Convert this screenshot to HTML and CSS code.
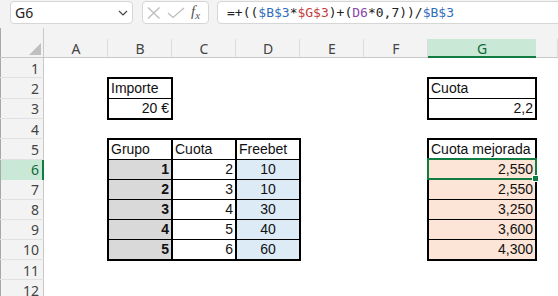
FILE: index.html
```html
<!DOCTYPE html>
<html lang="es">
<head>
  <meta charset="UTF-8">
  <title>Cuota mejorada</title>
  <link rel="stylesheet" href="styles.css">
</head>
<body>

  <div class="formula-bar">
    <div class="name-box">
      <span>G6</span>
      <svg width="10" height="6" viewBox="0 0 10 6"><polyline points="1,1 5,5 9,1" fill="none" stroke="#444" stroke-width="1.2"/></svg>
    </div>
    <div class="fx-box">
      <svg class="ico" width="14" height="12" viewBox="0 0 14 12"><path d="M1 0.5 L12.5 11.5 M12.5 0.5 L1 11.5" stroke="#bdbdbd" stroke-width="1.3" fill="none"/></svg>
      <svg class="ico" width="18" height="12" viewBox="0 0 18 12"><polyline points="1,6 6,10.5 17,1" fill="none" stroke="#bdbdbd" stroke-width="1.3"/></svg>
      <span class="fx"><i>f</i><sub>x</sub></span>
    </div>
    <div class="formula">=+((<span class="ref-b">$B$3</span>*<span class="ref-g">$G$3</span>)+(<span class="ref-d">D6</span>*0,7))/<span class="ref-b">$B$3</span></div>
  </div>

  <table class="sheet">
    <colgroup>
      <col class="c-head">
      <col class="c-std"><col class="c-std"><col class="c-std"><col class="c-std"><col class="c-std"><col class="c-std">
      <col class="c-wide">
      <col class="c-rest">
    </colgroup>
    <thead>
      <tr>
        <th class="corner"><span class="tri"></span></th>
        <th>A</th><th>B</th><th>C</th><th>D</th><th>E</th><th>F</th><th class="sel">G</th><th></th>
      </tr>
    </thead>
    <tbody>
      <tr><th>1</th><td></td><td></td><td></td><td></td><td></td><td></td><td></td><td></td></tr>
      <tr><th>2</th><td></td><td class="bt bl br tb">Importe</td><td></td><td></td><td></td><td></td><td class="bt bl br tb">Cuota</td><td></td></tr>
      <tr><th>3</th><td></td><td class="bl br bb num">20 €</td><td></td><td></td><td></td><td></td><td class="bl br bb num">2,2</td><td></td></tr>
      <tr><th>4</th><td></td><td></td><td></td><td></td><td></td><td></td><td></td><td></td></tr>
      <tr><th>5</th><td></td><td class="bt bl br tb">Grupo</td><td class="bt br tb">Cuota</td><td class="bt br tb">Freebet</td><td></td><td></td><td class="bt bl br tb">Cuota mejorada</td><td></td></tr>
      <tr><th class="sel">6</th><td></td><td class="bl br tb grp">1</td><td class="br tb num">2</td><td class="br tb fb">10</td><td></td><td></td><td class="bl br tb res active">2,550</td><td></td></tr>
      <tr><th>7</th><td></td><td class="bl br tb grp">2</td><td class="br tb num">3</td><td class="br tb fb">10</td><td></td><td></td><td class="bl br tb res">2,550</td><td></td></tr>
      <tr><th>8</th><td></td><td class="bl br tb grp">3</td><td class="br tb num">4</td><td class="br tb fb">30</td><td></td><td></td><td class="bl br tb res">3,250</td><td></td></tr>
      <tr><th>9</th><td></td><td class="bl br tb grp">4</td><td class="br tb num">5</td><td class="br tb fb">40</td><td></td><td></td><td class="bl br tb res">3,600</td><td></td></tr>
      <tr><th>10</th><td></td><td class="bl br bb grp">5</td><td class="br bb num">6</td><td class="br bb fb">60</td><td></td><td></td><td class="bl br bb res">4,300</td><td></td></tr>
      <tr><th>11</th><td></td><td></td><td></td><td></td><td></td><td></td><td></td><td></td></tr>
      <tr><th>12</th><td></td><td></td><td></td><td></td><td></td><td></td><td></td><td></td></tr>
    </tbody>
  </table>

</body>
</html>
```

FILE: styles.css
```css
body {
  margin: 0;
  background: #fff;
  font-family: "Liberation Sans", Arial, sans-serif;
  overflow: hidden;
}

/* formula bar */

.formula-bar {
  display: flex;
  align-items: flex-start;
  height: 28px;
  box-sizing: border-box;
  padding: 1px 0 0 10px;
  background: #f3f3f3;
  overflow: hidden;
}

.name-box {
  width: 123px;
  height: 23px;
  box-sizing: border-box;
  display: flex;
  align-items: center;
  justify-content: space-between;
  padding: 0 4px 0 4px;
  background: #fff;
  border: 1px solid #d6d6d6;
  border-radius: 4px;
  font-family: "Noto Sans", sans-serif;
  font-size: 14px;
  color: #222;
}

.fx-box {
  width: 67px;
  height: 23px;
  box-sizing: border-box;
  margin-left: 9px;
  display: flex;
  align-items: center;
  gap: 6px;
  padding-left: 4px;
  background: #fff;
  border: 1px solid #d6d6d6;
  border-radius: 4px;
}

.fx {
  font-family: "Liberation Serif", serif;
  font-size: 15px;
  color: #555;
  line-height: 1;
}

.fx sub {
  font-size: 11px;
  font-style: italic;
  vertical-align: -3px;
}

.formula {
  flex: 1 0 360px;
  height: 23px;
  box-sizing: border-box;
  margin-left: 8px;
  margin-right: -20px;
  padding-left: 9px;
  background: #fff;
  border: 1px solid #d6d6d6;
  border-radius: 4px;
  font-family: "DejaVu Sans Mono", monospace;
  font-size: 13px;
  line-height: 21px;
  color: #222;
  white-space: nowrap;
}

.ref-b { color: #2f6ebd; }
.ref-g { color: #c43d3d; }
.ref-d { color: #8a47a8; }

/* sheet grid */

.sheet {
  border-collapse: collapse;
  table-layout: fixed;
  width: 558px;
}

.c-head { width: 44px; }
.c-std { width: 64px; }
.c-wide { width: 108px; }
.c-rest { width: 22px; }

.sheet thead th {
  height: 20px;
  padding: 10px 0 0;
  font: normal 14px "Noto Sans", sans-serif;
  line-height: 19px;
  color: #444;
  background:
    linear-gradient(#c8c8c8, #c8c8c8) left bottom / 100% 1px no-repeat,
    linear-gradient(#dcdcdc, #dcdcdc) right bottom / 1px 19px no-repeat,
    #f3f3f3;
}

.sheet thead th.corner {
  position: relative;
  background:
    linear-gradient(#c8c8c8, #c8c8c8) left bottom / 100% 1px no-repeat,
    linear-gradient(#c8c8c8, #c8c8c8) right top / 1px 100% no-repeat,
    linear-gradient(#a8a8a8, #a8a8a8) left top / 1px 100% no-repeat,
    #f3f3f3;
}

.tri {
  position: absolute;
  right: 3px;
  bottom: 3px;
  width: 0;
  height: 0;
  border-left: 12px solid transparent;
  border-bottom: 12px solid #bfbfbf;
}

.sheet thead th.sel {
  color: #0e6b37;
  background:
    linear-gradient(#107c41, #107c41) left bottom / 100% 2px no-repeat,
    linear-gradient(#cae8d6, #cae8d6) left bottom / 100% 19px no-repeat,
    #f3f3f3;
}

.sheet tbody tr {
  height: 20px;
}

.sheet tbody th {
  padding: 0 5px 0 0;
  text-align: right;
  font: normal 14px "Noto Sans", sans-serif;
  line-height: 19px;
  color: #444;
  background:
    linear-gradient(#e1e1e1, #e1e1e1) left bottom / 100% 1px no-repeat,
    linear-gradient(#c8c8c8, #c8c8c8) right top / 1px 100% no-repeat,
    linear-gradient(#a8a8a8, #a8a8a8) left top / 1px 100% no-repeat,
    #f3f3f3;
}

.sheet tbody th.sel {
  color: #0e6b37;
  background:
    linear-gradient(#107c41, #107c41) right top / 2px 100% no-repeat,
    linear-gradient(#a8a8a8, #a8a8a8) left top / 1px 100% no-repeat,
    #cae8d6;
}

.sheet td {
  padding: 0 2px 0 2px;
  font-size: 14px;
  line-height: 19px;
  color: #111;
  vertical-align: bottom;
  white-space: nowrap;
  overflow: visible;
}

/* cell borders */
.bt { border-top: 2px solid #000; }
.bb { border-bottom: 2px solid #000; }
.bl { border-left: 2px solid #000; }
.br { border-right: 2px solid #000; }
.tb { border-bottom: 1px solid #000; }

.num { text-align: right; }

.grp {
  text-align: right;
  font-weight: bold;
  background: #d9d9d9;
}

.fb {
  text-align: center;
  background: #ddebf7;
}

.res {
  text-align: right;
  background: #fce4d6;
}

/* active cell */
.active {
  position: relative;
}

.active::after {
  content: "";
  position: absolute;
  top: -2px;
  left: -2px;
  right: -2px;
  bottom: -1px;
  border: 2px solid #107c41;
}

.active::before {
  content: "";
  position: absolute;
  right: -4px;
  bottom: -3px;
  width: 5px;
  height: 5px;
  background: #107c41;
  border: 1px solid #fff;
  z-index: 1;
}
```
